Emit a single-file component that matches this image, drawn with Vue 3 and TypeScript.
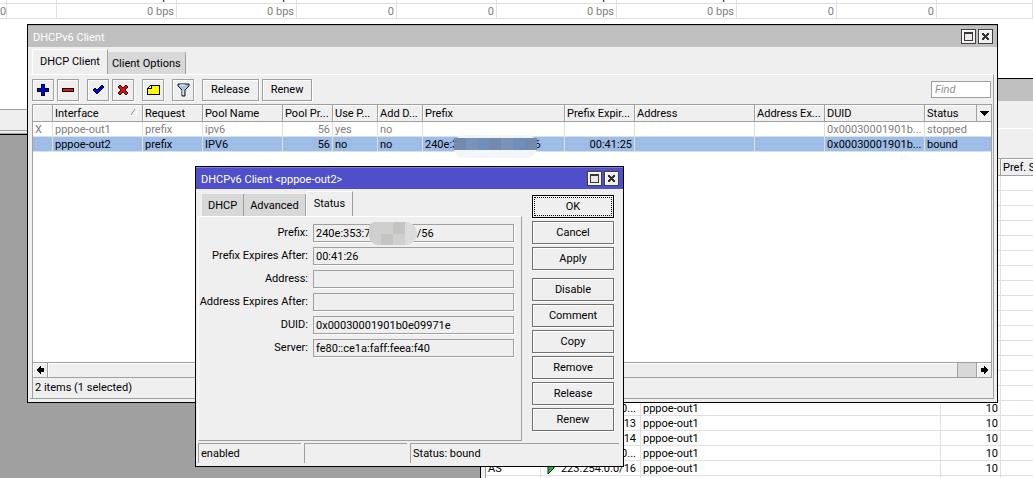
<script setup lang="ts">
interface Column {
  label: string
  width?: number
  sorted?: boolean
  right?: boolean
}

const columns: Column[] = [
  { label: '', width: 20 },
  { label: 'Interface', width: 90, sorted: true },
  { label: 'Request', width: 60 },
  { label: 'Pool Name', width: 80 },
  { label: 'Pool Pr...', width: 50, right: true },
  { label: 'Use P...', width: 45 },
  { label: 'Add D...', width: 45 },
  { label: 'Prefix', width: 142 },
  { label: 'Prefix Expir...', width: 70, right: true },
  { label: 'Address', width: 120 },
  { label: 'Address Ex...', width: 70 },
  { label: 'DUID', width: 100 },
  { label: 'Status' },
]

const nb = '\u00a0'
const clients = [
  { selected: false, cells: ['X', 'pppoe-out1', 'prefix', 'ipv6', '56', 'yes', 'no', '', '', '', '', '0x00030001901b...', 'stopped'] },
  { selected: true, cells: ['', 'pppoe-out2', 'prefix', 'IPV6', '56', 'no', 'no', '240e:3' + nb.repeat(28) + '6', '00:41:25', '', '', '0x00030001901b...', 'bound'] },
]

const rates = [
  { width: 7, value: '0' },
  { width: 50, value: '' },
  { width: 120, value: '0 bps' },
  { width: 120, value: '0 bps' },
  { width: 100, value: '0' },
  { width: 100, value: '0' },
  { width: 120, value: '0 bps' },
  { width: 120, value: '0 bps' },
  { width: 100, value: '0' },
  { width: 100, value: '0' },
]

const emptyRoutes = 15
const routes = [
  { flags: '', dst: '0...' },
  { flags: '', dst: '13' },
  { flags: '', dst: '14' },
  { flags: '', dst: '0...' },
  { flags: 'AS', dst: '223.254.0.0/16' },
]

const fields = [
  { id: 'prefix', label: 'Prefix:', value: '240e:353:7' + nb.repeat(17) + '/56', hidden: true },
  { id: 'prefix-expires', label: 'Prefix Expires After:', value: '00:41:26', hidden: false },
  { id: 'address', label: 'Address:', value: '', hidden: false },
  { id: 'address-expires', label: 'Address Expires After:', value: '', hidden: false },
  { id: 'duid', label: 'DUID:', value: '0x00030001901b0e09971e', hidden: false },
  { id: 'server', label: 'Server:', value: 'fe80::ce1a:faff:feea:f40', hidden: false },
]

const actions = [
  ['OK', 'Cancel', 'Apply'],
  ['Disable', 'Comment', 'Copy', 'Remove', 'Release', 'Renew'],
]
</script>

<template>
  <div class="desktop">
    <section class="traffic">
      <table class="grid rates">
        <colgroup>
          <col v-for="(r, i) in rates" :key="i" :style="{ width: r.width + 'px' }" />
          <col />
        </colgroup>
        <tbody>
          <tr class="cut">
            <td v-for="(r, i) in rates" :key="i"><div>{{ r.value }}</div></td>
            <td></td>
          </tr>
          <tr>
            <td v-for="(r, i) in rates" :key="i">{{ r.value }}</td>
            <td></td>
          </tr>
        </tbody>
      </table>
      <div class="traffic-space"></div>
      <div class="traffic-status"></div>
    </section>

    <section class="routes">
      <div class="routes-title"></div>
      <div class="routes-tools"></div>
      <table class="grid routes-table">
        <colgroup>
          <col class="w-flags" />
          <col class="w-dst" />
          <col class="w-gate" />
          <col class="w-dist" />
          <col />
        </colgroup>
        <thead>
          <tr>
            <th></th>
            <th></th>
            <th></th>
            <th></th>
            <th><div class="head"><span>Pref. Source</span></div></th>
          </tr>
        </thead>
        <tbody>
          <tr v-for="n in emptyRoutes" :key="'e' + n">
            <td v-for="c in 5" :key="c"></td>
          </tr>
          <tr v-for="(r, i) in routes" :key="i">
            <td>{{ r.flags }}</td>
            <td class="dst">
              <div>
                <svg v-if="r.flags" class="flag" viewBox="0 0 8 12" width="8" height="12"><path d="M1 0V11L7 5V0Z" fill="#1fb81f" stroke="#123" /></svg>
                <span>{{ r.dst }}</span>
              </div>
            </td>
            <td>pppoe-out1</td>
            <td class="num">10</td>
            <td></td>
          </tr>
          <tr>
            <td v-for="c in 5" :key="c"></td>
          </tr>
        </tbody>
      </table>
    </section>

    <main class="window client">
      <header class="titlebar">
        <span class="title">DHCPv6 Client</span>
        <button class="sys" aria-label="Maximize"><svg viewBox="0 0 11 11" width="11" height="11" shape-rendering="crispEdges"><path d="M1 1H10V10H1Z" fill="#f0e8e8" /><path d="M1 1H10V10H1ZM2 3V9H9V3Z" fill="#383838" fill-rule="evenodd" /></svg></button>
        <button class="sys" aria-label="Close"><svg viewBox="0 0 11 11" width="11" height="11" shape-rendering="crispEdges"><path d="M2 2H4V3H5V4H6V3H7V2H9V4H8V5H7V6H8V7H9V9H7V8H6V7H5V8H4V9H2V7H3V6H4V5H3V4H2Z" fill="#303030" /></svg></button>
      </header>
      <nav class="tabs">
        <button class="tab active">DHCP Client</button>
        <button class="tab">Client Options</button>
      </nav>
      <div class="pane">
        <div class="toolbar">
          <button class="tool icon" aria-label="Add"><svg viewBox="0 0 13 13" width="13" height="13" shape-rendering="crispEdges"><path d="M4 1H8V5H12V9H8V13H4V9H0V5H4Z" fill="#000" /><path d="M5 2H7V6H11V8H7V12H5V8H1V6H5Z" fill="#0000f0" /></svg></button>
          <button class="tool icon" aria-label="Remove"><svg viewBox="0 0 13 13" width="13" height="13" shape-rendering="crispEdges"><path d="M0 5H12V9H0Z" fill="#000" /><path d="M1 6H11V8H1Z" fill="#f01010" /></svg></button>
          <button class="tool icon gap" aria-label="Enable"><svg viewBox="0 0 13 13" width="13" height="13"><path d="M1 7L3 5L5 7L10 2L12 4L5 11Z" fill="#0000f0" stroke="#000" /></svg></button>
          <button class="tool icon" aria-label="Disable"><svg viewBox="0 0 13 13" width="13" height="13"><path d="M1 4L3 2L6 5L9 2L11 4L8 7L11 10L9 12L6 9L3 12L1 10L4 7Z" fill="#e01010" stroke="#200" /></svg></button>
          <button class="tool icon gap" aria-label="Comment"><svg viewBox="0 0 13 13" width="13" height="13" shape-rendering="crispEdges"><path d="M4 2H13V12H0V5H1V4H2V3H3V2H4Z" fill="#000" /><path d="M5 3H12V11H1V6H5Z" fill="#ffff00" /><path d="M2 5H4V3H3V4H2Z" fill="#ffff90" /></svg></button>
          <button class="tool icon gap" aria-label="Filter"><svg viewBox="0 0 13 14" width="13" height="14"><path d="M1 1H12V3L8 7V13H5V7L1 3Z" fill="#a9c2e4" stroke="#111" /><path d="M6 7V12M3 2H8" stroke="#fff" /></svg></button>
          <button class="tool text gap">Release</button>
          <button class="tool text">Renew</button>
          <input class="find" type="text" placeholder="Find" aria-label="Find" />
        </div>
        <div class="list">
          <table class="grid clients">
            <colgroup>
              <col v-for="(c, i) in columns" :key="i" :style="c.width ? { width: c.width + 'px' } : {}" />
            </colgroup>
            <thead>
              <tr>
                <th v-for="(c, i) in columns" :key="i" :class="{ last: i === columns.length - 1 }">
                  <div class="head">
                    <span>{{ c.label }}</span>
                    <svg v-if="c.sorted" viewBox="0 0 8 8" width="8" height="8"><path d="M0 6.500H7V0" fill="none" stroke="#fff" /><path d="M1 6L5 0" stroke="#909090" /></svg>
                    <button v-if="i === columns.length - 1" class="menu" aria-label="Columns"><svg viewBox="0 0 9 5" width="9" height="5" shape-rendering="crispEdges"><path d="M0 0H9V1H8V2H7V3H6V4H5V5H4V4H3V3H2V2H1V1H0Z" /></svg></button>
                  </div>
                </th>
              </tr>
            </thead>
            <tbody>
              <tr v-for="(row, r) in clients" :key="r" :class="row.selected ? 'selected' : 'stopped'">
                <td v-for="(cell, i) in row.cells" :key="i" :class="{ num: columns[i].right, masked: row.selected && i === 7 }">{{ cell }}<div v-if="row.selected && i === 7" class="mask"><i v-for="n in 7" :key="n"></i></div></td>
              </tr>
            </tbody>
          </table>
        </div>
        <div class="scrollbar">
          <button class="arrow" aria-label="Scroll left"><svg viewBox="0 0 7 8" width="7" height="8" shape-rendering="crispEdges"><path d="M0 3H1V2H2V1H3V0H4V2H7V6H4V8H3V7H2V6H1V5H0Z" /></svg></button>
          <div class="thumb"></div>
          <div class="trough"></div>
          <button class="arrow" aria-label="Scroll right"><svg viewBox="0 0 7 8" width="7" height="8" shape-rendering="crispEdges"><path d="M7 3H6V2H5V1H4V0H3V2H0V6H3V8H4V7H5V6H6V5H7Z" /></svg></button>
        </div>
        <footer class="count">2 items (1 selected)</footer>
      </div>
    </main>

    <section class="window dialog" role="dialog" aria-label="DHCPv6 Client">
      <header class="titlebar">
        <span class="title">DHCPv6 Client &lt;pppoe-out2&gt;</span>
        <button class="sys" aria-label="Maximize"><svg viewBox="0 0 11 11" width="11" height="11" shape-rendering="crispEdges"><path d="M1 1H10V10H1Z" fill="#f0e8e8" /><path d="M1 1H10V10H1ZM2 3V9H9V3Z" fill="#383838" fill-rule="evenodd" /></svg></button>
        <button class="sys" aria-label="Close"><svg viewBox="0 0 11 11" width="11" height="11" shape-rendering="crispEdges"><path d="M2 2H4V3H5V4H6V3H7V2H9V4H8V5H7V6H8V7H9V9H7V8H6V7H5V8H4V9H2V7H3V6H4V5H3V4H2Z" fill="#303030" /></svg></button>
      </header>
      <div class="content">
        <div class="form-side">
          <nav class="tabs">
            <button class="tab">DHCP</button>
            <button class="tab">Advanced</button>
            <button class="tab active">Status</button>
          </nav>
          <div class="form">
            <div v-for="f in fields" :key="f.id" class="field">
              <label :for="f.id">{{ f.label }}</label>
              <input :id="f.id" type="text" readonly :value="f.value" />
              <div v-if="f.hidden" class="blot"><i v-for="n in 8" :key="n"></i></div>
            </div>
          </div>
        </div>
        <div class="actions">
          <div v-for="(group, g) in actions" :key="g" class="group">
            <button v-for="a in group" :key="a" class="action" :class="{ primary: a === 'OK' }">{{ a }}</button>
          </div>
        </div>
      </div>
      <footer class="statusbar">
        <span>enabled</span>
        <span></span>
        <span>Status: bound</span>
      </footer>
    </section>
  </div>
</template>

<style>
body {
  background: #a0a0a0;
}
</style>

<style scoped>
.desktop {
  position: relative;
  min-height: 100vh;
  overflow: hidden;
  background: #a0a0a0;
  color: #000;
  font: 11px/14px Roboto, "Liberation Sans", sans-serif;
}
.desktop *,
.desktop *::before {
  box-sizing: border-box;
}
button,
input {
  margin: 0;
  padding: 0;
  border: 0;
  border-radius: 0;
  background: #efefef;
  color: #000;
  font: inherit;
}
button {
  display: flex;
  align-items: center;
  justify-content: center;
  flex: none;
}
svg {
  display: block;
  flex: none;
}

.grid {
  width: 100%;
  table-layout: fixed;
  border-collapse: separate;
  border-spacing: 0;
  background: #fff;
}
.grid td {
  height: 15px;
  padding: 2px 2px 0;
  border-right: 1px solid #e0e0e0;
  border-bottom: 1px solid #e0e0e0;
  line-height: 12px;
  white-space: nowrap;
  overflow: hidden;
}
.grid th {
  height: 18px;
  padding: 0 0 0 2px;
  border-right: 1px solid #a0a0a0;
  border-bottom: 1px solid #a0a0a0;
  border-top: 1px solid #a0a0a0;
  background: #efefef;
  box-shadow: inset 1px 1px #fff;
  font-weight: normal;
  text-align: left;
  white-space: nowrap;
  overflow: hidden;
}
.grid .num {
  text-align: right;
}

/* Traffic window at the back */
.traffic {
  border-bottom: 1px solid #000;
  background: #efefef;
}
.rates td {
  padding: 2px 2px 0 0;
  color: #808080;
  text-align: right;
}
.rates .cut td {
  height: 4px;
  padding-top: 0;
  color: #000;
}
.cut div {
  display: flex;
  align-items: flex-end;
  justify-content: flex-end;
  height: 3px;
  overflow: hidden;
}
.traffic-space {
  height: 90px;
  background: #fff;
}
.traffic-status {
  height: 25px;
  border-top: 1px solid #a0a0a0;
  border-bottom: 4px double #a0a0a0;
}

/* Route list behind the client window */
.routes {
  position: absolute;
  top: 78px;
  left: 480px;
  right: 0;
  bottom: 0;
  overflow: hidden;
  border-top: 1px solid #000;
  border-left: 1px solid #000;
  background: #efefef;
}
.routes-title {
  height: 22px;
  background: #c0c0c0;
}
.routes-tools {
  height: 57px;
  background: linear-gradient(#efefef 27px, #fff 27px, #fff 28px, #efefef 28px);
}
.routes-table {
  margin-left: 4px;
  border-left: 1px solid #a0a0a0;
}
.w-flags { width: 55px; }
.w-dst { width: 100px; }
.w-gate { width: 300px; }
.w-dist { width: 60px; }
.dst div {
  display: flex;
  align-items: center;
  justify-content: flex-end;
  gap: 6px;
  padding-right: 2px;
}

/* Windows */
.window {
  position: absolute;
  display: flex;
  flex-direction: column;
  border: 1px solid #000;
  background: #efefef;
}
.titlebar {
  display: flex;
  align-items: center;
  gap: 2px;
  height: 22px;
  padding: 0 4px 0 5px;
  border-top: 1px solid #a8a8a8;
  background: #c0c0c0;
  color: #fff;
}
.title {
  flex: 1;
  padding-top: 2px;
}
.sys {
  width: 15px;
  height: 15px;
  border: 1px solid #404040;
  box-shadow: inset 1px 1px #fff;
}
.tabs {
  display: flex;
  align-items: flex-end;
}
.tab {
  height: 22px;
  padding: 2px 6px 0;
  border-right: 1px solid #a0a0a0;
  background: #d8d8d8;
}
.tab.active {
  height: 25px;
  padding: 0 7px;
  border-top: 1px solid #fff;
  border-left: 1px solid #fff;
  background: #efefef;
}

.client {
  top: 24px;
  left: 27px;
  right: 35px;
  height: 379px;
}
.client .tabs {
  height: 27px;
  padding-left: 4px;
}
.client .tab:last-child {
  padding: 2px 4px 0;
}
.pane {
  display: flex;
  flex: 1;
  flex-direction: column;
  margin: 0 3px 3px 2px;
  padding: 0 1px 0 2px;
  border-top: 1px solid #fff;
  border-right: 1px solid #a0a0a0;
  border-bottom: 1px solid #a0a0a0;
}
.toolbar {
  display: flex;
  align-items: center;
  gap: 3px;
  height: 29px;
}
.tool {
  height: 22px;
  border: 1px solid #a0a0a0;
  box-shadow: inset 1px 1px #fff, 1px 1px #fff;
}
.tool.icon {
  width: 22px;
}
.tool.text {
  padding: 0 8px;
}
.tool.gap {
  margin-left: 5px;
}
.find {
  width: 60px;
  height: 17px;
  margin-left: auto;
  margin-right: 1px;
  padding: 0 3px;
  border: 1px solid #a0a0a0;
  background: #fff;
}
.find::placeholder {
  color: #909090;
  font-style: italic;
}
.list {
  flex: 1;
  border-left: 1px solid #a0a0a0;
  border-right: 1px solid #a0a0a0;
  background: #fff;
}
.head {
  display: flex;
  align-items: center;
  height: 16px;
}
.head span {
  flex: 1;
  padding-top: 2px;
}
.head svg {
  margin-right: 4px;
}
.menu {
  width: 15px;
  height: 16px;
  border-left: 1px solid #a0a0a0;
}
.head .menu svg {
  margin: 0;
}
.clients .last,
.clients td:last-child {
  border-right: 0;
}
.stopped {
  color: #808080;
}
.selected {
  background: #9dbde9;
}
.grid .masked {
  position: relative;
  overflow: visible;
}
.mask {
  position: absolute;
  top: -2px;
  left: 31px;
  display: flex;
  width: 83px;
  height: 23px;
  padding: 3px 0 8px;
  border-radius: 10px;
  background: #f2f6fb;
}
.mask i {
  flex: 1;
  background: #7892b9;
}
.mask i:nth-child(3n) {
  background: #6f8fba;
}
.mask i:nth-child(3n + 1) {
  background: #7489ae;
}
.scrollbar {
  display: flex;
  height: 16px;
  border: 1px solid #a0a0a0;
}
.arrow {
  width: 14px;
  box-shadow: inset 1px 1px #fff;
}
.thumb {
  flex: 1;
  border-left: 1px solid #a0a0a0;
  border-right: 1px solid #a0a0a0;
  box-shadow: inset 1px 1px #fff;
}
.trough {
  width: 19px;
  border-right: 1px solid #a0a0a0;
  background: #d8d8d8;
}
.count {
  height: 20px;
  padding: 3px 2px;
  border-left: 1px solid #a0a0a0;
}

.dialog {
  top: 166px;
  left: 195px;
  width: 429px;
}
.dialog .titlebar {
  border-top-color: #8080e0;
  background: #4f4fcb;
}
.content {
  display: flex;
  gap: 10px;
  padding: 2px 9px 0 2px;
}
.form-side {
  display: flex;
  flex: 1;
  flex-direction: column;
  min-width: 0;
}
.dialog .tabs {
  height: 25px;
  padding-left: 4px;
}
.form {
  display: flex;
  flex: 1;
  flex-direction: column;
  gap: 5px;
  padding: 7px 7px 0 0;
  border: 1px solid #a0a0a0;
  border-top-color: #fff;
  border-left-color: #fff;
}
.field {
  position: relative;
  display: flex;
  align-items: center;
  height: 18px;
}
.field label {
  flex: 1;
  padding-right: 5px;
  text-align: right;
  white-space: nowrap;
}
.field input {
  width: 201px;
  height: 18px;
  padding: 0 2px;
  border: 1px solid #a0a0a0;
  box-shadow: 1px 1px #fff;
}
.blot {
  position: absolute;
  top: -2px;
  right: 97px;
  display: grid;
  grid-template-columns: repeat(4, 1fr);
  width: 48px;
  height: 23px;
  overflow: hidden;
  border-radius: 6px 12px 12px 10px;
}
.blot i {
  background: #cfcfcf;
}
.blot i:nth-child(3n) {
  background: #c4c4c2;
}
.blot i:nth-child(4n) {
  background: #dcdcdc;
}
.actions {
  display: flex;
  flex-direction: column;
  gap: 8px;
  padding: 4px 0 10px;
}
.group {
  display: flex;
  flex-direction: column;
  gap: 3px;
}
.action {
  width: 82px;
  height: 23px;
  border: 1px solid #707070;
  box-shadow: inset 1px 1px #fff, 1px 1px #fff;
}
.action.primary {
  border-color: #000;
  outline: 1px dotted #000;
  outline-offset: -3px;
}
.statusbar {
  display: grid;
  grid-template-columns: 103px 103px 1fr;
  gap: 3px;
  padding: 2px 4px 3px 2px;
}
.statusbar span {
  height: 20px;
  padding: 3px 2px 0;
  border-top: 1px solid #a0a0a0;
  border-left: 1px solid #a0a0a0;
}
</style>
